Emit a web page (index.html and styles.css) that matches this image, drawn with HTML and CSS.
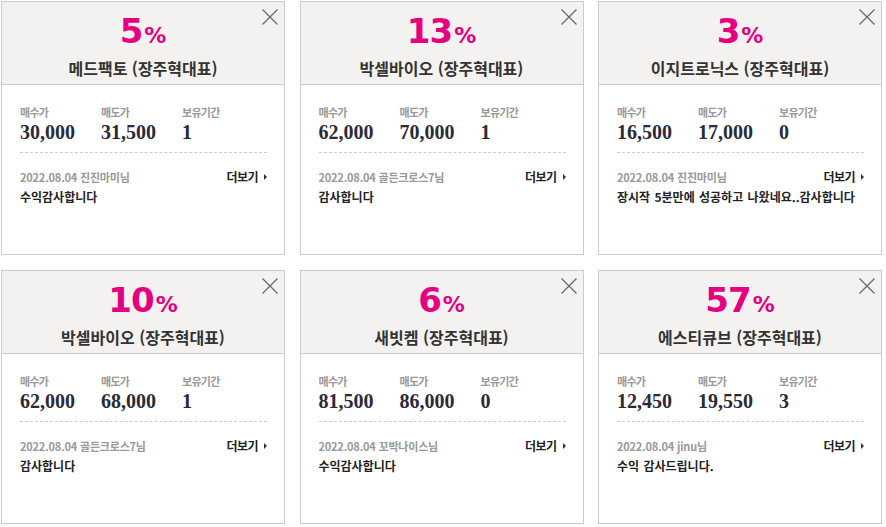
FILE: index.html
```html
<!DOCTYPE html>
<html lang="ko">
<head>
    <meta charset="UTF-8">
    <meta name="viewport" content="width=device-width, initial-scale=1.0">
    <title>수익 후기</title>
    <link rel="stylesheet" href="styles.css">
</head>
<body>
    <div class="board">
        <div class="card">
            <div class="card-head">
                <div class="rate">5<span class="pct">%</span></div>
                <div class="stock">메드팩토 (장주혁대표)</div>
                <button class="close"><svg width="16" height="16" viewBox="0 0 16 16"><path d="M0.5 0.5L15.5 15.5M15.5 0.5L0.5 15.5" stroke="#666" stroke-width="1.2" fill="none"/></svg></button>
            </div>
            <div class="card-body">
                <div class="stats">
                    <div class="stat"><div class="label">매수가</div><div class="value">30,000</div></div>
                    <div class="stat"><div class="label">매도가</div><div class="value">31,500</div></div>
                    <div class="stat"><div class="label">보유기간</div><div class="value">1</div></div>
                </div>
                <div class="meta">
                    <span class="date">2022.08.04 진진마미님</span>
                    <a class="more" href="#">더보기</a>
                </div>
                <p class="comment">수익감사합니다</p>
            </div>
        </div>

        <div class="card">
            <div class="card-head">
                <div class="rate">13<span class="pct">%</span></div>
                <div class="stock">박셀바이오 (장주혁대표)</div>
                <button class="close"><svg width="16" height="16" viewBox="0 0 16 16"><path d="M0.5 0.5L15.5 15.5M15.5 0.5L0.5 15.5" stroke="#666" stroke-width="1.2" fill="none"/></svg></button>
            </div>
            <div class="card-body">
                <div class="stats">
                    <div class="stat"><div class="label">매수가</div><div class="value">62,000</div></div>
                    <div class="stat"><div class="label">매도가</div><div class="value">70,000</div></div>
                    <div class="stat"><div class="label">보유기간</div><div class="value">1</div></div>
                </div>
                <div class="meta">
                    <span class="date">2022.08.04 골든크로스7님</span>
                    <a class="more" href="#">더보기</a>
                </div>
                <p class="comment">감사합니다</p>
            </div>
        </div>

        <div class="card">
            <div class="card-head">
                <div class="rate">3<span class="pct">%</span></div>
                <div class="stock">이지트로닉스 (장주혁대표)</div>
                <button class="close"><svg width="16" height="16" viewBox="0 0 16 16"><path d="M0.5 0.5L15.5 15.5M15.5 0.5L0.5 15.5" stroke="#666" stroke-width="1.2" fill="none"/></svg></button>
            </div>
            <div class="card-body">
                <div class="stats">
                    <div class="stat"><div class="label">매수가</div><div class="value">16,500</div></div>
                    <div class="stat"><div class="label">매도가</div><div class="value">17,000</div></div>
                    <div class="stat"><div class="label">보유기간</div><div class="value">0</div></div>
                </div>
                <div class="meta">
                    <span class="date">2022.08.04 진진마미님</span>
                    <a class="more" href="#">더보기</a>
                </div>
                <p class="comment">장시작 5분만에 성공하고 나왔네요..감사합니다</p>
            </div>
        </div>

        <div class="card">
            <div class="card-head">
                <div class="rate">10<span class="pct">%</span></div>
                <div class="stock">박셀바이오 (장주혁대표)</div>
                <button class="close"><svg width="16" height="16" viewBox="0 0 16 16"><path d="M0.5 0.5L15.5 15.5M15.5 0.5L0.5 15.5" stroke="#666" stroke-width="1.2" fill="none"/></svg></button>
            </div>
            <div class="card-body">
                <div class="stats">
                    <div class="stat"><div class="label">매수가</div><div class="value">62,000</div></div>
                    <div class="stat"><div class="label">매도가</div><div class="value">68,000</div></div>
                    <div class="stat"><div class="label">보유기간</div><div class="value">1</div></div>
                </div>
                <div class="meta">
                    <span class="date">2022.08.04 골든크로스7님</span>
                    <a class="more" href="#">더보기</a>
                </div>
                <p class="comment">감사합니다</p>
            </div>
        </div>

        <div class="card">
            <div class="card-head">
                <div class="rate">6<span class="pct">%</span></div>
                <div class="stock">새빗켐 (장주혁대표)</div>
                <button class="close"><svg width="16" height="16" viewBox="0 0 16 16"><path d="M0.5 0.5L15.5 15.5M15.5 0.5L0.5 15.5" stroke="#666" stroke-width="1.2" fill="none"/></svg></button>
            </div>
            <div class="card-body">
                <div class="stats">
                    <div class="stat"><div class="label">매수가</div><div class="value">81,500</div></div>
                    <div class="stat"><div class="label">매도가</div><div class="value">86,000</div></div>
                    <div class="stat"><div class="label">보유기간</div><div class="value">0</div></div>
                </div>
                <div class="meta">
                    <span class="date">2022.08.04 꼬박나이스님</span>
                    <a class="more" href="#">더보기</a>
                </div>
                <p class="comment">수익감사합니다</p>
            </div>
        </div>

        <div class="card">
            <div class="card-head">
                <div class="rate">57<span class="pct">%</span></div>
                <div class="stock">에스티큐브 (장주혁대표)</div>
                <button class="close"><svg width="16" height="16" viewBox="0 0 16 16"><path d="M0.5 0.5L15.5 15.5M15.5 0.5L0.5 15.5" stroke="#666" stroke-width="1.2" fill="none"/></svg></button>
            </div>
            <div class="card-body">
                <div class="stats">
                    <div class="stat"><div class="label">매수가</div><div class="value">12,450</div></div>
                    <div class="stat"><div class="label">매도가</div><div class="value">19,550</div></div>
                    <div class="stat"><div class="label">보유기간</div><div class="value">3</div></div>
                </div>
                <div class="meta">
                    <span class="date">2022.08.04 jinu님</span>
                    <a class="more" href="#">더보기</a>
                </div>
                <p class="comment">수익 감사드립니다.</p>
            </div>
        </div>
    </div>
</body>
</html>
```

FILE: styles.css
```css
body {
    margin: 0;
    font-family: "Noto Sans CJK KR", "Noto Sans", sans-serif;
    background-color: #fff;
    color: #333;
}

.board {
    display: grid;
    grid-template-columns: repeat(3, 284px);
    column-gap: 14.5px;
    row-gap: 15px;
    padding: 1px 0 0 1px;
}

.card {
    position: relative;
    height: 254px;
    box-sizing: border-box;
    border: 1px solid #ccc;
    background-color: #fff;
}

.card-head {
    height: 83px;
    box-sizing: border-box;
    padding-top: 9px;
    border-bottom: 1px solid #ccc;
    background-color: #f4f2f1;
    text-align: center;
}

.rate {
    font-family: "DejaVu Sans", Verdana, sans-serif;
    font-weight: bold;
    font-size: 34px;
    line-height: 40px;
    color: #e4007f;
    letter-spacing: -1px;
}

.pct {
    font-size: 22px;
    margin-left: 2px;
    letter-spacing: 0;
}

.stock {
    margin-top: 2px;
    font-size: 16px;
    font-weight: bold;
    line-height: 20px;
    color: #333;
}

.close {
    position: absolute;
    top: 7px;
    right: 6px;
    width: 16px;
    height: 16px;
    padding: 0;
    border: none;
    background: none;
    cursor: pointer;
}

.close svg {
    display: block;
}

.card-body {
    padding: 19px 17px 0 18px;
}

.stats {
    display: flex;
    padding-bottom: 8px;
    border-bottom: 1px dashed #ccc;
}

.stat {
    width: 81px;
}

.label {
    font-size: 11px;
    font-weight: bold;
    line-height: 16px;
    letter-spacing: -0.7px;
    color: #999;
}

.value {
    font-family: "Liberation Serif", "Times New Roman", serif;
    font-size: 20px;
    font-weight: bold;
    line-height: 24px;
    color: #2a2a3a;
}

.meta {
    display: flex;
    justify-content: space-between;
    align-items: center;
    margin-top: 16px;
    line-height: 16px;
}

.date {
    font-size: 11px;
    font-weight: bold;
    letter-spacing: -0.2px;
    color: #999;
}

.more {
    position: relative;
    padding-right: 9px;
    font-size: 12px;
    font-weight: bold;
    letter-spacing: -0.5px;
    color: #222;
    text-decoration: none;
}

.more::after {
    content: "";
    position: absolute;
    right: 0;
    top: 5px;
    border-left: 3px solid #333;
    border-top: 3px solid transparent;
    border-bottom: 3px solid transparent;
}

.comment {
    margin: 3px 0 0;
    font-size: 12px;
    font-weight: bold;
    line-height: 18px;
    word-spacing: 1px;
    white-space: nowrap;
    color: #222;
}
```
